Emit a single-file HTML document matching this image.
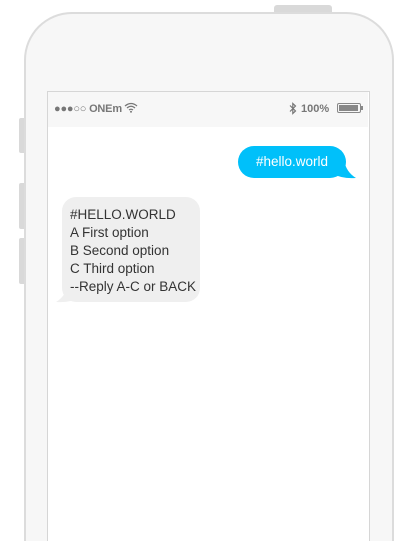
<!DOCTYPE html><html style="overflow:hidden;height:541px"><head><style>
body{margin:0;width:407px;height:541px;overflow:hidden;background:#fff;position:relative;font-family:"Liberation Sans",sans-serif}
.a{position:absolute}
</style></head><body>
<div class="a" style="left:274px;top:5px;width:58px;height:10px;background:#d9d9d9;border-radius:3px"></div>
<div class="a" style="left:19px;top:118px;width:8px;height:35px;background:#d9d9d9;border-radius:2px"></div>
<div class="a" style="left:19px;top:183px;width:8px;height:46px;background:#d9d9d9;border-radius:2px"></div>
<div class="a" style="left:19px;top:238px;width:8px;height:46px;background:#d9d9d9;border-radius:2px"></div>
<div class="a" style="left:24px;top:12px;width:366px;height:527px;background:#f7f7f7;border:2px solid #dcdcdc;border-bottom:none;border-radius:48px 48px 0 0"></div>
<div class="a" style="left:47px;top:91px;width:321px;height:449px;background:#fff;border:1px solid #d6d6d6;border-bottom:none"></div>
<div class="a" style="left:48px;top:92px;width:320px;height:35px;background:#f7f7f7"></div>
<div class="a" style="left:54px;top:103px;font-size:11px;font-weight:bold;color:#777;letter-spacing:-0.2px">●●●○○ ONEm</div>
<svg class="a" style="left:124px;top:102px" width="14" height="11" viewBox="0 0 14 11"><path d="M1 4Q7-1 13 4M3 6Q7 2.5 11 6M5 8Q7 6.5 9 8" stroke="#777" stroke-width="1.3" fill="none"/><circle cx="7" cy="9.7" r="1" fill="#777"/></svg>
<svg class="a" style="left:289px;top:102px" width="8" height="13" viewBox="0 0 8 13"><path d="M1 3.5L6.5 9 3.8 11.5V1.5L6.5 4 1 9.5" stroke="#777" stroke-width="1.2" fill="none"/></svg>
<div class="a" style="left:301px;top:103px;font-size:11px;font-weight:bold;color:#777">100%</div>
<div class="a" style="left:337px;top:103px;width:22px;height:8px;border:1px solid #888;border-radius:2px"></div>
<div class="a" style="left:339px;top:105px;width:19px;height:6px;background:#888"></div>
<div class="a" style="left:361px;top:106px;width:2px;height:4px;background:#888"></div>
<svg class="a" style="left:330px;top:160px" width="28" height="20"><path d="M0 0L14 0Q16 12 26 18Q12 19 4 14Z" fill="#00c0fa"/></svg>
<div class="a" style="left:238px;top:146px;width:108px;height:32px;background:#00c0fa;border-radius:16px;color:#fff;font-size:13.5px;line-height:32px;text-align:center">#hello.world</div>
<svg class="a" style="left:54px;top:284px" width="28" height="20"><path d="M28 0L14 0Q12 12 2 18Q16 19 24 14Z" fill="#efefef"/></svg>
<div class="a" style="left:62px;top:197px;width:130px;height:96px;padding:9px 0 0 8px;background:#efefef;border-radius:14px;color:#333;font-size:13.5px;line-height:18px">#HELLO.WORLD<br>A First option<br>B Second option<br>C Third option<br>--Reply A-C or BACK</div>
</body></html>
